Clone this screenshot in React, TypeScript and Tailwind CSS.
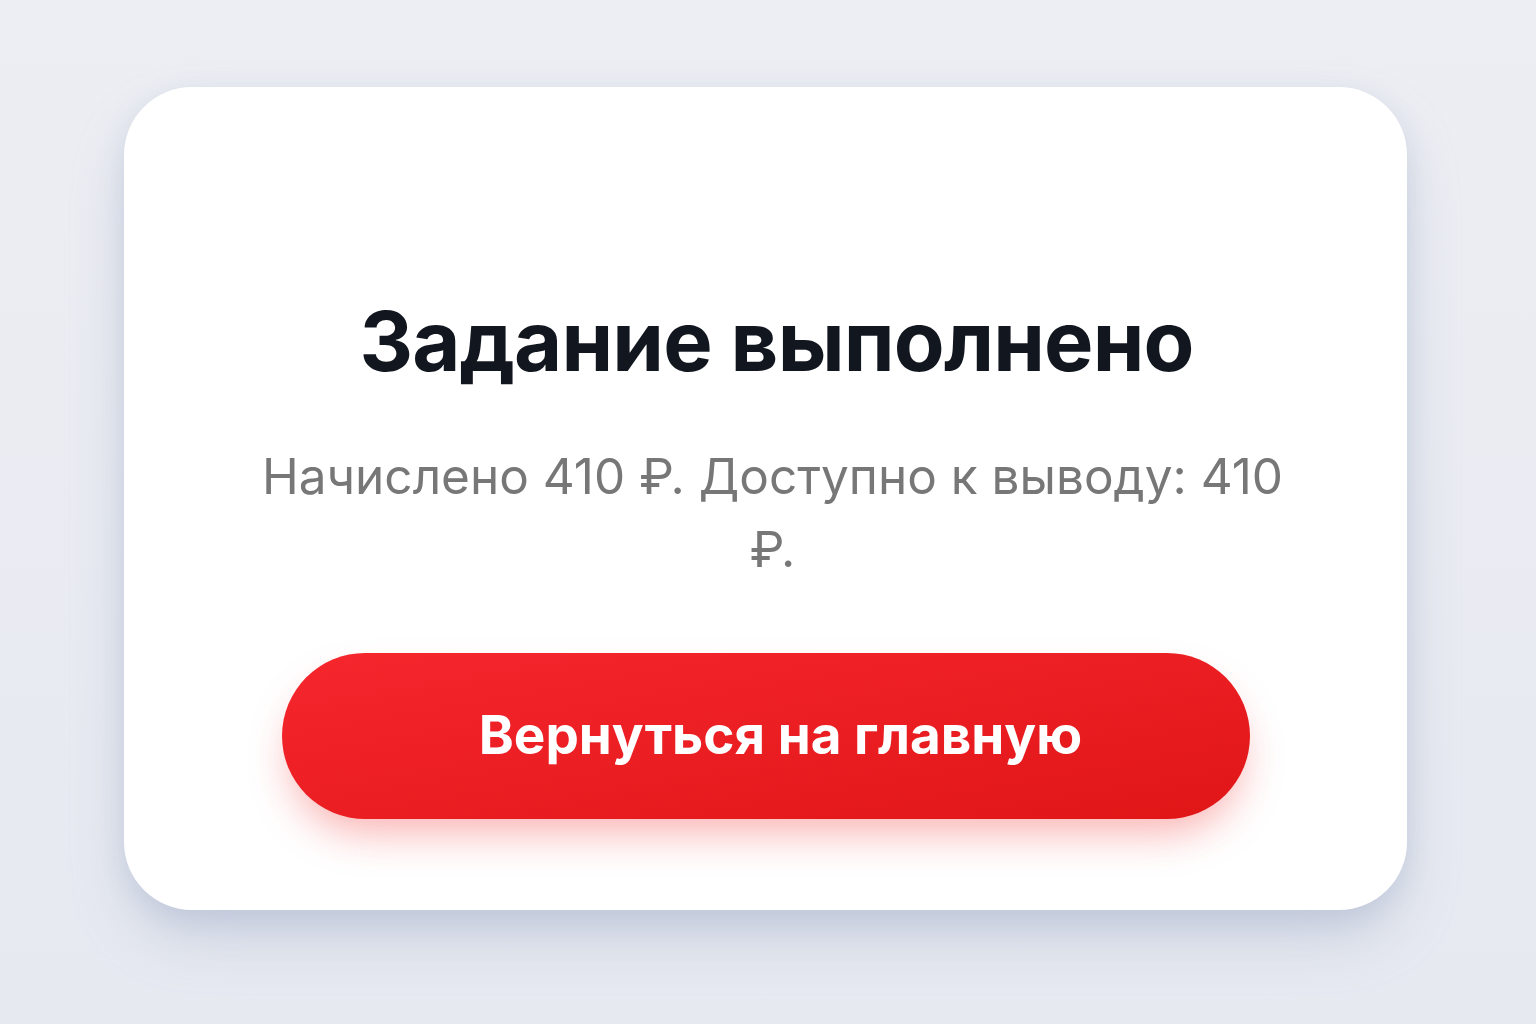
export default function App() {
  return (
    <div
      className="min-h-screen w-full bg-gradient-to-b from-[#eceef3] to-[#e6e9f0] pt-[87px]"
      style={{ fontFamily: 'Inter, "Noto Sans", sans-serif' }}
    >
      <div className="ml-[124px] w-[1283px] rounded-[68px] bg-white pt-[205px] pb-[91px] shadow-[0_30px_60px_-10px_rgba(150,165,195,0.45),0_8px_24px_rgba(150,165,195,0.2)]">
        <h1 className="pl-[22px] text-center text-[83px] font-bold leading-[1.2] tracking-[-0.01em] text-[#12161f]">
          Задание выполнено
        </h1>
        <p className="mx-auto mt-[48px] max-w-[1050px] pl-[14px] text-center text-[49.5px] leading-[73px] text-[#777777]">
          Начислено 410 ₽. Доступно к выводу: 410 ₽.
        </p>
        <div className="mt-[67px] flex justify-center">
          <button className="flex h-[166px] w-[968px] items-center justify-center rounded-full bg-gradient-to-br from-[#f6262d] to-[#e01516] pl-[30px] text-[53px] font-bold text-white shadow-[0_22px_40px_-8px_rgba(240,40,40,0.35)]">
            Вернуться на главную
          </button>
        </div>
      </div>
    </div>
  );
}
